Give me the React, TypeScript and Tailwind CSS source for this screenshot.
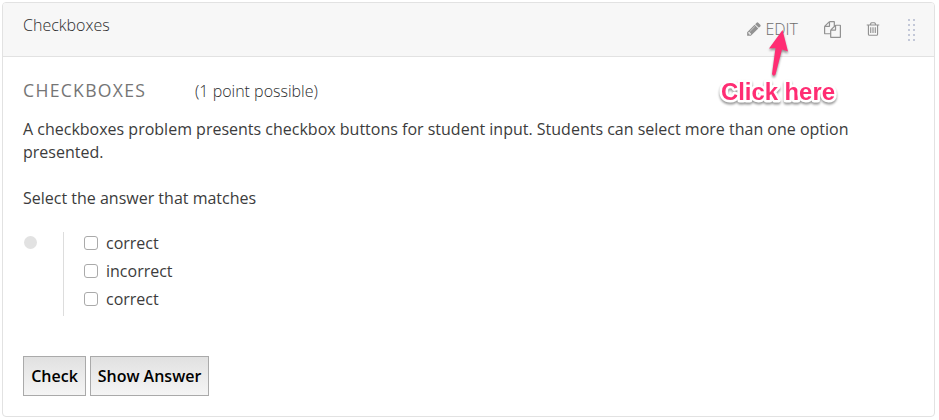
import clsx from "clsx";

const choices = ["correct", "incorrect", "correct"];

const PENCIL =
  "M491 1536l91-91-235-235-91 91v107h128v128h107zm523-928q0-22-22-22-10 0-17 7l-542 542q-7 7-7 17 0 22 22 22 10 0 17-7l542-542q7-7 7-17zm-54-192l416 416-832 832h-416v-416zm683 96q0 53-37 90l-166 166-416-416 166-165q36-38 90-38 53 0 91 38l235 234q37 39 37 91z";
const COPY =
  "M1696 384q40 0 68 28t28 68v1216q0 40-28 68t-68 28h-960q-40 0-68-28t-28-68v-288h-544q-40 0-68-28t-28-68v-672q0-40 20-88t48-76l408-408q28-28 76-48t88-20h416q40 0 68 28t28 68v328q68-40 128-40h416zm-544 213l-299 299h299v-299zm-640-384l-299 299h299v-299zm196 647l316-316v-416h-384v416q0 40-28 68t-68 28h-416v640h512v-256q0-40 20-88t48-76zm956 804v-1152h-384v416q0 40-28 68t-68 28h-416v640h896z";
const TRASH =
  "M704 736v576q0 14-9 23t-23 9h-64q-14 0-23-9t-9-23v-576q0-14 9-23t23-9h64q14 0 23 9t9 23zm256 0v576q0 14-9 23t-23 9h-64q-14 0-23-9t-9-23v-576q0-14 9-23t23-9h64q14 0 23 9t9 23zm256 0v576q0 14-9 23t-23 9h-64q-14 0-23-9t-9-23v-576q0-14 9-23t23-9h64q14 0 23 9t9 23zm128 724v-948h-896v948q0 22 7 40.5t14.5 27 10.5 8.5h832q3 0 10.5-8.5t14.5-27 7-40.5zm-672-1076h448l-48-117q-7-9-17-11h-317q-10 2-17 11zm928 32v64q0 14-9 23t-23 9h-96v948q0 83-47 143.5t-113 60.5h-832q-66 0-113-58.5t-47-141.5v-952h-96q-14 0-23-9t-9-23v-64q0-14 9-23t23-9h309l70-167q15-37 54-63t79-26h320q40 0 79 26t54 63l70 167h309q14 0 23 9t9 23z";

function Icon({ d, className }: { d: string; className?: string }) {
  return (
    <svg viewBox="0 0 1792 1792" fill="currentColor" className={clsx("shrink-0", className)}>
      <path d={d} />
    </svg>
  );
}

function DragHandle() {
  return (
    <div className="grid grid-cols-[2px_2px] gap-[3px]">
      {Array.from({ length: 10 }, (_, i) => (
        <span key={i} className="size-[2px] bg-[#c3c8d8]" />
      ))}
    </div>
  );
}

function Header() {
  return (
    <header className="flex h-[54px] justify-between rounded-t-[3px] border-b border-[#e2e2e2] bg-[#f7f7f7] pl-5 pr-[19px]">
      <h1 className="pt-[10px] text-base font-light leading-6 text-[#2c2d2e]">Checkboxes</h1>
      <div className="flex h-[53px] items-center text-[#929292]">
        <button className="flex items-center gap-[3px] pb-[2px] text-base font-light">
          <Icon d={PENCIL} className="size-4" />
          <span className="text-[#6e6e6e]">EDIT</span>
        </button>
        <button className="ml-[26px]">
          <Icon d={COPY} className="size-[17px]" />
        </button>
        <button className="ml-6 pb-px">
          <Icon d={TRASH} className="size-4" />
        </button>
        <div className="ml-[27px]">
          <DragHandle />
        </div>
      </div>
    </header>
  );
}

// Arrow and label laid over the header, pointing at EDIT
function Callout() {
  return (
    <div className="pointer-events-none absolute left-[716px] top-[28px] h-[84px] w-[126px]">
      <svg
        viewBox="0 0 126 84"
        className="h-full w-full overflow-visible drop-shadow-[0_2px_1px_rgba(0,0,0,0.4)]"
      >
        <path
          d="M66.500 2L53 20.500L59.500 20L56 46Q57.500 49 59.500 46.500L66 21.500L72 23.500Z"
          fill="#ff2d73"
        />
        <text
          x="5"
          y="72"
          textLength="114"
          fill="#ff2d73"
          stroke="#fff"
          strokeWidth="5"
          strokeLinejoin="round"
          paintOrder="stroke"
          className="font-['Liberation_Sans',sans-serif] text-2xl font-bold"
        >
          Click here
        </text>
      </svg>
    </div>
  );
}

export default function App() {
  return (
    <div className="relative h-[420px] w-[939px] bg-white pl-[2px] pt-[2px] font-['Open_Sans',sans-serif] text-base text-[#3c3c3c]">
      <section className="flex h-[415px] w-[933px] flex-col rounded-[4px] border border-[#e2e2e2]">
        <Header />
        <main className="flex flex-col items-start px-5 pt-[21px]">
          <div className="flex items-baseline">
            <h2 className="w-[172px] text-[17.6px] leading-6 tracking-[1.3px] text-[#757575]">
              CHECKBOXES
            </h2>
            <span className="font-light leading-6 text-[#2c2d2e]">(1 point possible)</span>
          </div>
          <p className="mt-[15px] w-[850px] leading-[23px]">
            A checkboxes problem presents checkbox buttons for student input. Students can select
            more than one option presented.
          </p>
          <p className="mt-[23px] leading-[23px]">Select the answer that matches</p>
          <div className="mt-[22px] flex">
            <span className="ml-px mt-[4px] size-[13px] rounded-full bg-[#e2e2e2]" />
            <div className="ml-[26px] flex h-[84px] flex-col border-l border-[#ddd] pl-5">
              {choices.map((choice, i) => (
                <label key={i} className="flex h-7 items-center gap-2 pb-[6px]">
                  <input
                    type="checkbox"
                    className="size-[14px] appearance-none rounded-[3px] border border-[#aaa] bg-white"
                  />
                  {choice}
                </label>
              ))}
            </div>
          </div>
          <div className="mt-10 flex gap-1 font-semibold text-black">
            <button className="h-10 w-[63px] border border-[#aaa] bg-linear-to-b from-[#e1e1e1] to-[#f5f5f5]">
              Check
            </button>
            <button className="h-10 w-[119px] border border-[#aaa] bg-linear-to-b from-[#e1e1e1] to-[#f5f5f5]">
              Show Answer
            </button>
          </div>
        </main>
      </section>
      <Callout />
    </div>
  );
}
